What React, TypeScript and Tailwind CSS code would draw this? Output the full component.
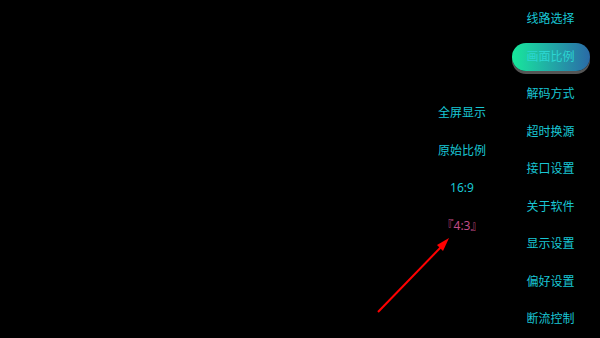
import React from 'react';

const MENU = ['线路选择', '画面比例', '解码方式', '超时换源', '接口设置', '关于软件', '显示设置', '偏好设置', '断流控制'];
const RATIOS = ['全屏显示', '原始比例', '16:9', '『4:3』'];

export default function App() {
    return (
        <div
            className="relative w-[600px] h-[338px] bg-black overflow-hidden flex"
            style={{ fontFamily: '"Noto Sans", "Noto Sans CJK SC", sans-serif' }}
        >
            {/* spacer */}
            <div className="flex-1" />

            {/* Ratio options */}
            <div className="w-[80px] flex flex-col items-center pt-[94.5px] mr-[1px]">
                {RATIOS.map((r, i) => (
                    <div
                        key={r}
                        className={`h-[37.5px] flex items-center text-[12px] ${i === 3 ? 'text-[#c04a86]' : 'text-[#19c6d4]'}`}
                    >
                        {r}
                    </div>
                ))}
            </div>

            {/* Settings menu */}
            <div className="w-[95px] flex flex-col items-center mt-[0.5px] mr-[2px]">
                {MENU.map((m, i) => (
                    <div key={m} className="h-[37.5px] flex items-center justify-center">
                        {i === 1 ? (
                            <div className="w-[78px] h-[28px] rounded-full bg-gradient-to-r from-[#17e89a] to-[#2a6aa6] shadow-[0_3px_0_#555] flex items-center justify-center text-[12px] text-[#2cd6d2]">
                                {m}
                            </div>
                        ) : (
                            <span className="text-[12px] text-[#19c6d4]">{m}</span>
                        )}
                    </div>
                ))}
            </div>

            {/* Annotation arrow */}
            <svg className="absolute inset-0 pointer-events-none" width="600" height="338">
                <line x1="378" y1="312" x2="442" y2="246" stroke="#ff0000" strokeWidth="2" />
                <polygon points="449,238 437,245 443,251" fill="#ff0000" />
            </svg>
        </div>
    );
}
